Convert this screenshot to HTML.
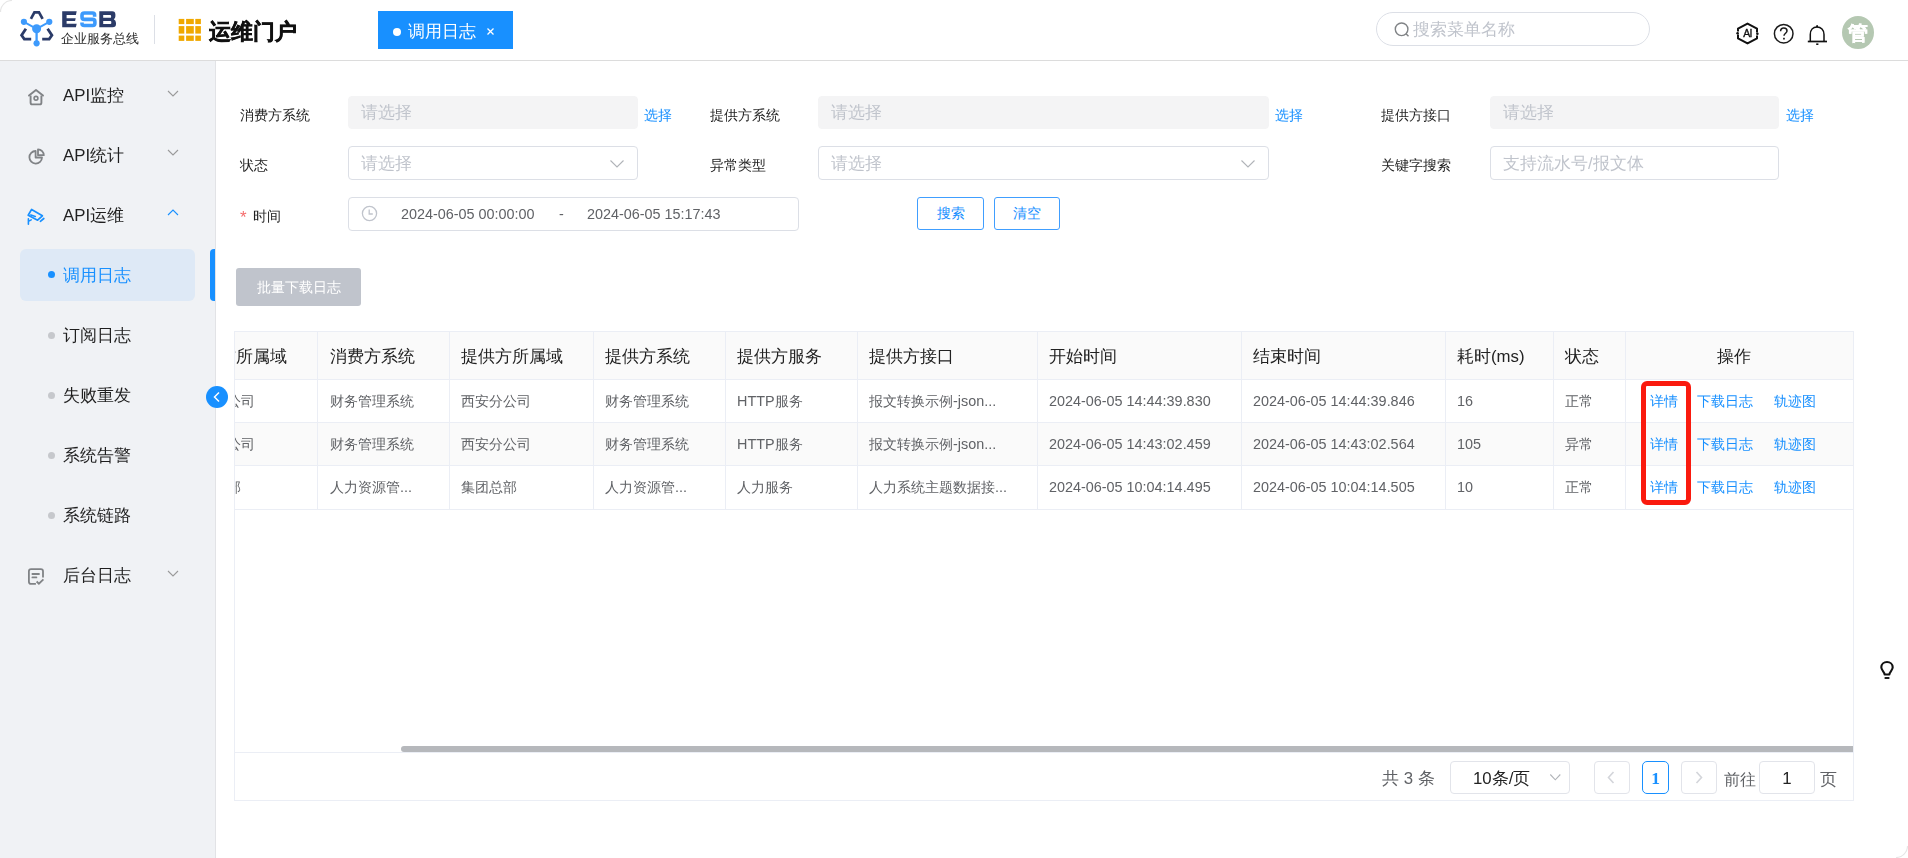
<!DOCTYPE html>
<html><head><meta charset="utf-8">
<style>
*{box-sizing:border-box;margin:0;padding:0}
html,body{width:1908px;height:858px;overflow:hidden;background:#fff;font-family:"Liberation Sans",sans-serif;color:#222}
.a{position:absolute;white-space:nowrap;will-change:transform}
#header{position:absolute;left:0;top:0;width:1908px;height:61px;background:#fff;border-bottom:1px solid #dcdcdc}
#side{position:absolute;left:0;top:61px;width:216px;height:797px;background:#f0f2f5;border-right:1px solid #e2e3e6}
.mi{font-size:16.8px;line-height:16.8px;color:#1f1f1f}
.dot{position:absolute;width:7px;height:7px;border-radius:50%;background:#c6c8cc}
.lbl{font-size:14.4px;line-height:14.4px;color:#1f1f1f}
.inp{position:absolute;height:33px;border:1px solid #dcdfe6;border-radius:4px;background:#fff}
.dis{background:#f4f4f5;border-color:#f4f4f5}
.ph{font-size:16.8px;line-height:16.8px;color:#c0c4cc}
.link{font-size:14.4px;line-height:14.4px;color:#1890ff}
.btn{position:absolute;height:33px;border:1px solid #409eff;border-radius:3px;background:#fff;color:#1890ff;font-size:14.4px;line-height:31px;text-align:center}
#tbl{position:absolute;left:234px;top:331px;width:1620px;height:470px;border:1px solid #ebeef5;overflow:hidden}
.th{font-size:16.8px;line-height:16.8px;color:#222}
.td{font-size:14.4px;line-height:14.4px;color:#606266}
.vl{position:absolute;top:0;width:1px;height:178px;background:#ebeef5}
.hl{position:absolute;left:0;width:1620px;height:1px;background:#ebeef5}
.pg{position:absolute;height:33px;border:1px solid #e2e4ea;border-radius:4px;background:#fff}
</style></head>
<body>
<!-- HEADER -->
<div id="header">
  <!-- logo icon -->
  <svg class="a" style="left:0;top:0" width="140" height="60" viewBox="0 0 140 60">
    <path d="M30.9 18.8 L34.4 12.4 L39 12.4 L42.6 18.8" fill="none" stroke="#2b3b68" stroke-width="2.7" stroke-linejoin="miter"/>
    <path d="M25.9 28.7 L21.6 35.3 L24.3 39.1 L31.2 39.1" fill="none" stroke="#2b3b68" stroke-width="2.8" stroke-linejoin="miter"/>
    <path d="M47.6 28.7 L51.9 35.3 L49.2 39.1 L42.2 39.1" fill="none" stroke="#2b3b68" stroke-width="2.8" stroke-linejoin="miter"/>
    <path d="M23.9 21.8 L36.6 28.8 L49.3 21.8" fill="none" stroke="#3d9afc" stroke-width="1.9"/>
    <path d="M36.6 29 L36.6 43" fill="none" stroke="#3d9afc" stroke-width="2.3"/>
    <circle cx="23.9" cy="21.8" r="3.1" fill="#3d9afc"/>
    <circle cx="49.3" cy="21.8" r="3.1" fill="#3d9afc"/>
    <circle cx="36.6" cy="28.8" r="4.5" fill="#3d9afc"/>
    <circle cx="36.6" cy="43.3" r="3.1" fill="#3d9afc"/>
    <path fill="#2b3b68" d="M62.2 11.25 H76.7 L75.9 15 H66.6 V18.3 H75.7 L75.1 20.9 H66.6 V23.8 H76.7 L75.9 27.3 H62.2 Z"/>
    <path fill="none" stroke="#3d9afc" stroke-width="3.6" d="M94.6 16.8 L94.6 15 Q94.6 13.05 92.6 13.05 L84.3 13.05 Q82 13.05 82 15.3 L82 16.9 Q82 19.4 84.5 19.4 L92.6 19.4 Q94.9 19.4 94.9 21.7 L94.9 23.3 Q94.9 25.5 92.7 25.5 L84.2 25.5 Q82 25.5 82 23.5 L82 22.4"/>
    <path fill="#2b3b68" fill-rule="evenodd" d="M99.3 11.25 H112.2 Q115.4 11.25 115.4 14.6 V16.3 Q115.4 18.3 113.8 19.3 Q116 20.2 116 23 V24 Q116 27.3 112.6 27.3 H99.3 Z M103.2 15 H110.2 Q111.1 15 111.1 15.9 V16.9 Q111.1 17.8 110.2 17.8 H103.2 Z M103.2 21 H110.4 Q111.3 21 111.3 21.9 V23.1 Q111.3 24 110.4 24 H103.2 Z"/>
  </svg>
  <div class="a" style="left:61px;top:32.5px;font-size:12.7px;line-height:12.7px;color:#2a2a2a">企业服务总线</div>
  <div class="a" style="left:154px;top:15px;width:1px;height:29px;background:#dcdfe6"></div>
  <!-- grid icon -->
  <svg class="a" style="left:0;top:0" width="210" height="50" viewBox="0 0 210 50"><g fill="#f0a800"><rect x="178.7" y="18.9" width="5.6" height="5.2"/><rect x="178.7" y="26.1" width="5.6" height="7.5"/><rect x="178.7" y="35.6" width="5.6" height="5.3"/><rect x="186.1" y="18.9" width="7.7" height="5.2"/><rect x="186.1" y="26.1" width="7.7" height="7.5"/><rect x="186.1" y="35.6" width="7.7" height="5.3"/><rect x="195.3" y="18.9" width="5.6" height="5.2"/><rect x="195.3" y="26.1" width="5.6" height="7.5"/><rect x="195.3" y="35.6" width="5.6" height="5.3"/></g></svg>
  <div class="a" style="left:209px;top:20.5px;font-size:21.6px;line-height:21.6px;font-weight:bold;color:#111;-webkit-text-stroke:0.5px #111">运维门户</div>
  <!-- tab -->
  <div class="a" style="left:378px;top:11px;width:135px;height:38px;background:#1890ff"></div>
  <div class="a" style="left:393px;top:28px;width:8px;height:8px;border-radius:50%;background:#fff"></div>
  <div class="a" style="left:408px;top:24px;font-size:16.8px;line-height:16.8px;color:#fff">调用日志</div>
  <svg class="a" style="left:486px;top:27px" width="9" height="9" viewBox="0 0 9 9"><path d="M1.5 1.5 L7.5 7.5 M7.5 1.5 L1.5 7.5" stroke="#fff" stroke-width="1.3"/></svg>
  <!-- search -->
  <div class="a" style="left:1376px;top:12px;width:274px;height:34px;border:1px solid #dcdfe6;border-radius:17px;background:#fff"></div>
  <svg class="a" style="left:1393px;top:21px" width="18" height="18" viewBox="0 0 18 18"><circle cx="8.6" cy="8.3" r="6.3" fill="none" stroke="#808386" stroke-width="1.4"/><path d="M13 12.8 L15.5 15.2" stroke="#808386" stroke-width="1.4"/></svg>
  <div class="a" style="left:1413px;top:21.5px;font-size:16.8px;line-height:16.8px;color:#c0c4cc">搜索菜单名称</div>
  <!-- icons -->
  <svg class="a" style="left:1735px;top:21px" width="25" height="25" viewBox="0 0 25 25">
    <path d="M3 10.5 L3 7.6 L12.5 2.6 L22 7.6 L22 11.5" fill="none" stroke="#111" stroke-width="2" stroke-linejoin="round"/>
    <path d="M22 14.5 L22 17.4 L12.5 22.4 L3 17.4 L3 13.5" fill="none" stroke="#111" stroke-width="2" stroke-linejoin="round"/>
    <circle cx="2.6" cy="12.3" r="1.3" fill="#111"/><circle cx="22.4" cy="12.7" r="1.3" fill="#111"/>
    <text x="12.6" y="16.3" text-anchor="middle" font-family="Liberation Sans" font-size="10.5" fill="#111" stroke="#111" stroke-width="0.35" letter-spacing="-0.6">AI</text>
  </svg>
  <svg class="a" style="left:1772px;top:22px" width="24" height="24" viewBox="0 0 24 24">
    <circle cx="11.7" cy="11.7" r="9.3" fill="none" stroke="#1b1b1b" stroke-width="1.5"/>
    <path d="M8.6 9.3 C8.6 7.2 10 6 11.8 6 C13.7 6 15 7.2 15 9 C15 11 12 11.5 12 13.8" fill="none" stroke="#1b1b1b" stroke-width="1.5"/>
    <rect x="11.1" y="15.8" width="1.7" height="1.7" fill="#1b1b1b"/>
  </svg>
  <svg class="a" style="left:1806px;top:22px" width="24" height="24" viewBox="0 0 24 24">
    <path d="M4.3 19.3 L4.3 12.5 C4.3 8 7 5 11 5 C15 5 18 8 18 12.5 L18 19.3" fill="none" stroke="#111" stroke-width="1.5"/>
    <path d="M1.8 19.5 L21 19.5" stroke="#111" stroke-width="1.7"/>
    <path d="M10.5 5 L11.1 3.2 L11.7 5 Z" fill="#111" stroke="#111"/>
    <path d="M10.2 22.2 L12.4 22.2" stroke="#111" stroke-width="1.6"/>
  </svg>
  <div class="a" style="left:1842px;top:16px;width:32px;height:33px;border-radius:50%;background:#b5c8b2"></div>
  <div class="a" style="left:1848px;top:22.5px;font-size:20px;line-height:20px;font-weight:bold;color:#fff;-webkit-text-stroke:0.5px #fff">管</div>
</div>

<!-- SIDEBAR -->
<div id="side"></div>
<div id="menu">
  <!-- API监控 -->
  <svg class="a" style="left:26px;top:87px" width="20" height="20" viewBox="0 0 20 20">
    <path d="M3 8.6 L10 3 L17 8.6" fill="none" stroke="#808386" stroke-width="1.9" stroke-linejoin="round" stroke-linecap="round"/>
    <path d="M4.6 8.5 L4.6 15.8 Q4.6 17.4 6.2 17.4 L13.8 17.4 Q15.4 17.4 15.4 15.8 L15.4 8.5" fill="none" stroke="#808386" stroke-width="1.9"/>
    <circle cx="10" cy="11.3" r="1.9" fill="none" stroke="#808386" stroke-width="1.6"/>
  </svg>
  <div class="a mi" style="left:63px;top:87.5px">API监控</div>
  <svg class="a" style="left:166px;top:89px" width="14" height="10" viewBox="0 0 14 10"><path d="M2 2 L7 7 L12 2" fill="none" stroke="#9a9a9a" stroke-width="1.1"/></svg>
  <!-- API统计 -->
  <svg class="a" style="left:26.5px;top:146.3px" width="20" height="20" viewBox="0 0 20 20">
    <path d="M8.6 5 A6.3 6.3 0 1 0 15 11.5 L8.6 11.5 Z" fill="none" stroke="#808386" stroke-width="1.8" stroke-linejoin="round"/>
    <path d="M11 3.3 A6 6 0 0 1 16.8 9.2 L11 9.2 Z" fill="none" stroke="#808386" stroke-width="1.8" stroke-linejoin="round"/>
  </svg>
  <div class="a mi" style="left:63px;top:147.5px">API统计</div>
  <svg class="a" style="left:166px;top:148px" width="14" height="10" viewBox="0 0 14 10"><path d="M2 2 L7 7 L12 2" fill="none" stroke="#9a9a9a" stroke-width="1.1"/></svg>
  <!-- API运维 -->
  <svg class="a" style="left:26px;top:206px" width="20" height="20" viewBox="0 0 20 20">
    <path d="M5.6 3.4 L16.4 9.8 L11.6 14.2 L2.2 9.2 Z" fill="none" stroke="#1890ff" stroke-width="1.7" stroke-linejoin="round"/>
    <path d="M4.9 8.9 L9.3 10.4" stroke="#1890ff" stroke-width="1.6" stroke-linecap="round"/>
    <path d="M2.4 12.7 L2.4 18.2 M2.4 15.4 L5.2 13.9" fill="none" stroke="#1890ff" stroke-width="1.6" stroke-linecap="round"/>
    <path d="M14.4 15.3 L17.8 12.5" stroke="#1890ff" stroke-width="1.7" stroke-linecap="round"/>
  </svg>
  <div class="a mi" style="left:63px;top:207.5px">API运维</div>
  <svg class="a" style="left:166px;top:208px" width="14" height="10" viewBox="0 0 14 10"><path d="M2 7 L7 2 L12 7" fill="none" stroke="#1890ff" stroke-width="1.1"/></svg>
  <!-- active -->
  <div class="a" style="left:20px;top:249px;width:175px;height:52px;border-radius:6px;background:#dee9f6"></div>
  <div class="a" style="left:210px;top:249px;width:5px;height:52px;border-radius:4px 0 0 4px;background:#1890ff"></div>
  <div class="dot" style="left:48px;top:271px;background:#1890ff"></div>
  <div class="a mi" style="left:63px;top:268px;color:#1890ff">调用日志</div>
  <div class="dot" style="left:48px;top:331.5px"></div>
  <div class="a mi" style="left:63px;top:328px">订阅日志</div>
  <div class="dot" style="left:48px;top:391.5px"></div>
  <div class="a mi" style="left:63px;top:388px">失败重发</div>
  <div class="dot" style="left:48px;top:451.5px"></div>
  <div class="a mi" style="left:63px;top:448px">系统告警</div>
  <div class="dot" style="left:48px;top:511.5px"></div>
  <div class="a mi" style="left:63px;top:508px">系统链路</div>
  <!-- 后台日志 -->
  <svg class="a" style="left:26px;top:566px" width="20" height="20" viewBox="0 0 20 20">
    <path d="M9.9 17.9 L5.1 17.9 Q2.9 17.9 2.9 15.7 L2.9 5.3 Q2.9 3.1 5.1 3.1 L14.8 3.1 Q17 3.1 17 5.3 L17 11.6" fill="none" stroke="#808386" stroke-width="1.8"/>
    <path d="M6.4 8 L13 8 M6.4 11.4 L10.4 11.4" stroke="#808386" stroke-width="1.8" stroke-linecap="round"/>
    <path d="M10.6 15.5 L12.9 17.7 L17.4 13.4" fill="none" stroke="#808386" stroke-width="1.8"/>
  </svg>
  <div class="a mi" style="left:63px;top:568px">后台日志</div>
  <svg class="a" style="left:166px;top:569px" width="14" height="10" viewBox="0 0 14 10"><path d="M2 2 L7 7 L12 2" fill="none" stroke="#9a9a9a" stroke-width="1.1"/></svg>
  <!-- collapse button -->
  <div class="a" style="z-index:5;left:206px;top:386px;width:22px;height:22px;border-radius:50%;background:#1890ff"></div>
  <svg class="a" style="z-index:6;left:206px;top:386px" width="22" height="22" viewBox="0 0 22 22"><path d="M13 6.5 L8.5 11 L13 15.5" fill="none" stroke="#fff" stroke-width="1.5"/></svg>
</div>

<!-- CONTENT -->
<div id="content">
  <!-- row1 -->
  <div class="a lbl" style="left:240px;top:108px">消费方系统</div>
  <div class="inp dis" style="left:348px;top:96px;width:290px"></div>
  <div class="a ph" style="left:361px;top:104.5px">请选择</div>
  <div class="a link" style="left:643.5px;top:107.5px">选择</div>
  <div class="a lbl" style="left:710px;top:108px">提供方系统</div>
  <div class="inp dis" style="left:818px;top:96px;width:451px"></div>
  <div class="a ph" style="left:831px;top:104.5px">请选择</div>
  <div class="a link" style="left:1275px;top:107.5px">选择</div>
  <div class="a lbl" style="left:1381px;top:108px">提供方接口</div>
  <div class="inp dis" style="left:1490px;top:96px;width:289px"></div>
  <div class="a ph" style="left:1503px;top:104.5px">请选择</div>
  <div class="a link" style="left:1785.5px;top:107.5px">选择</div>
  <!-- row2 -->
  <div class="a lbl" style="left:240px;top:158px">状态</div>
  <div class="inp" style="left:348px;top:146px;width:290px;height:34px"></div>
  <div class="a ph" style="left:361px;top:156px">请选择</div>
  <svg class="a" style="left:609px;top:159px" width="16" height="10" viewBox="0 0 16 10"><path d="M1.5 1.5 L8 8 L14.5 1.5" fill="none" stroke="#b0b3b8" stroke-width="1.1"/></svg>
  <div class="a lbl" style="left:710px;top:158px">异常类型</div>
  <div class="inp" style="left:818px;top:146px;width:451px;height:34px"></div>
  <div class="a ph" style="left:831px;top:156px">请选择</div>
  <svg class="a" style="left:1240px;top:159px" width="16" height="10" viewBox="0 0 16 10"><path d="M1.5 1.5 L8 8 L14.5 1.5" fill="none" stroke="#b0b3b8" stroke-width="1.1"/></svg>
  <div class="a lbl" style="left:1381px;top:158px">关键字搜索</div>
  <div class="inp" style="left:1490px;top:146px;width:289px;height:34px"></div>
  <div class="a ph" style="left:1503px;top:156px">支持流水号/报文体</div>
  <!-- row3 -->
  <div class="a" style="left:239.5px;top:208.5px;font-size:17px;line-height:17px;color:#f56c6c">*</div>
  <div class="a lbl" style="left:252.5px;top:209px">时间</div>
  <div class="inp" style="left:348px;top:197px;width:451px;height:34px"></div>
  <svg class="a" style="left:361px;top:205px" width="17" height="17" viewBox="0 0 17 17"><circle cx="8.5" cy="8.5" r="7.1" fill="none" stroke="#c0c4cc" stroke-width="1.3"/><path d="M8.2 4.5 L8.2 9 L11.8 9" fill="none" stroke="#c0c4cc" stroke-width="1.3"/></svg>
  <div class="a td" style="left:400.5px;top:206.5px">2024-06-05 00:00:00</div>
  <div class="a td" style="left:559px;top:206.5px">-</div>
  <div class="a td" style="left:587px;top:206.5px">2024-06-05 15:17:43</div>
  <div class="btn" style="left:917px;top:197px;width:67px">搜索</div>
  <div class="btn" style="left:994px;top:197px;width:66px">清空</div>
  <!-- batch -->
  <div class="a" style="left:236px;top:268px;width:125px;height:38px;border-radius:3px;background:#c0c4cc;color:#fff;font-size:14.4px;line-height:38px;text-align:center">批量下载日志</div>
  <!-- table -->
  <div id="tbl">
<div class="a" style="left:0;top:0;width:1620px;height:47px;background:#fafafa"></div>
<div class="a" style="left:0;top:91px;width:1620px;height:42px;background:#fafafa"></div>
<div class="vl" style="left:82px;height:177px"></div>
<div class="vl" style="left:214px;height:177px"></div>
<div class="vl" style="left:358px;height:177px"></div>
<div class="vl" style="left:490px;height:177px"></div>
<div class="vl" style="left:622px;height:177px"></div>
<div class="vl" style="left:802px;height:177px"></div>
<div class="vl" style="left:1006px;height:177px"></div>
<div class="vl" style="left:1210px;height:177px"></div>
<div class="vl" style="left:1318px;height:177px"></div>
<div class="vl" style="left:1390px;height:177px"></div>
<div class="hl" style="top:47px"></div>
<div class="hl" style="top:90px"></div>
<div class="hl" style="top:133px"></div>
<div class="hl" style="top:177px"></div>
<div class="a th" style="left:-50px;top:16.5px">消费方所属域</div>
<div class="a th" style="left:94.5px;top:16.5px">消费方系统</div>
<div class="a th" style="left:226px;top:16.5px">提供方所属域</div>
<div class="a th" style="left:370px;top:16.5px">提供方系统</div>
<div class="a th" style="left:502px;top:16.5px">提供方服务</div>
<div class="a th" style="left:634px;top:16.5px">提供方接口</div>
<div class="a th" style="left:814px;top:16.5px">开始时间</div>
<div class="a th" style="left:1018px;top:16.5px">结束时间</div>
<div class="a th" style="left:1222px;top:16.5px">耗时(ms)</div>
<div class="a th" style="left:1330px;top:16.5px">状态</div>
<div class="a th" style="left:1481.5px;top:16.5px">操作</div>
<div class="a td" style="left:-50px;top:61.5px">西安分公司</div>
<div class="a td" style="left:94.5px;top:61.5px">财务管理系统</div>
<div class="a td" style="left:226px;top:61.5px">西安分公司</div>
<div class="a td" style="left:370px;top:61.5px">财务管理系统</div>
<div class="a td" style="left:502px;top:61.5px">HTTP服务</div>
<div class="a td" style="left:634px;top:61.5px">报文转换示例-json...</div>
<div class="a td" style="left:814px;top:61.5px">2024-06-05 14:44:39.830</div>
<div class="a td" style="left:1018px;top:61.5px">2024-06-05 14:44:39.846</div>
<div class="a td" style="left:1222px;top:61.5px">16</div>
<div class="a td" style="left:1330px;top:61.5px">正常</div>
<div class="a link" style="left:1415px;top:61.5px">详情</div>
<div class="a link" style="left:1462.3px;top:61.5px">下载日志</div>
<div class="a link" style="left:1538.5px;top:61.5px">轨迹图</div>
<div class="a td" style="left:-50px;top:104.5px">西安分公司</div>
<div class="a td" style="left:94.5px;top:104.5px">财务管理系统</div>
<div class="a td" style="left:226px;top:104.5px">西安分公司</div>
<div class="a td" style="left:370px;top:104.5px">财务管理系统</div>
<div class="a td" style="left:502px;top:104.5px">HTTP服务</div>
<div class="a td" style="left:634px;top:104.5px">报文转换示例-json...</div>
<div class="a td" style="left:814px;top:104.5px">2024-06-05 14:43:02.459</div>
<div class="a td" style="left:1018px;top:104.5px">2024-06-05 14:43:02.564</div>
<div class="a td" style="left:1222px;top:104.5px">105</div>
<div class="a td" style="left:1330px;top:104.5px">异常</div>
<div class="a link" style="left:1415px;top:104.5px">详情</div>
<div class="a link" style="left:1462.3px;top:104.5px">下载日志</div>
<div class="a link" style="left:1538.5px;top:104.5px">轨迹图</div>
<div class="a td" style="left:-50px;top:148px">集团总部</div>
<div class="a td" style="left:94.5px;top:148px">人力资源管...</div>
<div class="a td" style="left:226px;top:148px">集团总部</div>
<div class="a td" style="left:370px;top:148px">人力资源管...</div>
<div class="a td" style="left:502px;top:148px">人力服务</div>
<div class="a td" style="left:634px;top:148px">人力系统主题数据接...</div>
<div class="a td" style="left:814px;top:148px">2024-06-05 10:04:14.495</div>
<div class="a td" style="left:1018px;top:148px">2024-06-05 10:04:14.505</div>
<div class="a td" style="left:1222px;top:148px">10</div>
<div class="a td" style="left:1330px;top:148px">正常</div>
<div class="a link" style="left:1415px;top:148px">详情</div>
<div class="a link" style="left:1462.3px;top:148px">下载日志</div>
<div class="a link" style="left:1538.5px;top:148px">轨迹图</div>
<div class="a" style="left:1406px;top:48.5px;width:50px;height:124px;border:5px solid #fa1a0e;border-radius:6px"></div>
<div class="hl" style="top:420px"></div>
<div class="a" style="left:166px;top:414px;width:1452px;height:6px;border-radius:3px 0 0 3px;background:#b6b8bc"></div>
<div class="a" style="left:1147px;top:439px;font-size:16.8px;line-height:16.8px;color:#606266">共 3 条</div>
<div class="pg" style="left:1215px;top:429px;width:120px;height:33px"></div>
<div class="a" style="left:1238px;top:438.5px;font-size:16.8px;line-height:16.8px;color:#222">10条/页</div>
<svg class="a" style="left:1314px;top:441px" width="13" height="9" viewBox="0 0 13 9"><path d="M1.3 1.5 L6.3 6.8 L11.3 1.5" fill="none" stroke="#b0b3b8" stroke-width="1.1"/></svg>
<div class="pg" style="left:1359px;top:429px;width:36px;height:33px"></div>
<svg class="a" style="left:1370px;top:438px" width="12" height="15" viewBox="0 0 12 15"><path d="M8.5 2 L3.5 7.5 L8.5 13" fill="none" stroke="#d3d5da" stroke-width="1.6"/></svg>
<div class="a" style="left:1407px;top:429px;width:27px;height:33px;border:1px solid #1890ff;border-radius:5px"></div>
<div class="a" style="left:1407px;top:438px;width:27px;text-align:center;font-family:'Liberation Serif',serif;font-weight:bold;font-size:17.5px;line-height:17.5px;color:#1890ff">1</div>
<div class="pg" style="left:1446px;top:429px;width:36px;height:33px"></div>
<svg class="a" style="left:1458px;top:438px" width="12" height="15" viewBox="0 0 12 15"><path d="M3.5 2 L8.5 7.5 L3.5 13" fill="none" stroke="#d3d5da" stroke-width="1.6"/></svg>
<div class="a" style="left:1489px;top:439.5px;font-size:15.6px;line-height:15.6px;color:#606266">前往</div>
<div class="pg" style="left:1524px;top:429px;width:56px;height:33px"></div>
<div class="a" style="left:1524px;top:439px;width:56px;text-align:center;font-size:16.8px;line-height:16.8px;color:#222">1</div>
<div class="a" style="left:1584.5px;top:439.5px;font-size:16.8px;line-height:16.8px;color:#606266">页</div>
</div>
</div>

<svg class="a" style="left:1878px;top:660px" width="19" height="22" viewBox="0 0 19 22"><path d="M6.6 14.5 C6.6 12 3.3 10.5 3.3 7.3 C3.3 4.2 5.9 2 9 2 C12.1 2 14.7 4.2 14.7 7.3 C14.7 10.5 11.4 12 11.4 14.5 Z" fill="none" stroke="#111" stroke-width="2.1" stroke-linejoin="round"/><path d="M6.6 18 L11.4 18" stroke="#111" stroke-width="1.9"/></svg>
<svg class="a" style="left:0;top:0;z-index:20" width="14" height="14" viewBox="0 0 14 14"><path d="M0.5 12 A11.5 11.5 0 0 1 12 0.5" fill="none" stroke="#e6e6e6" stroke-width="1.2"/></svg>
<svg class="a" style="left:1894px;top:844px;z-index:20" width="14" height="14" viewBox="0 0 14 14"><path d="M13.5 2 A11.5 11.5 0 0 1 2 13.5" fill="none" stroke="#e6e6e6" stroke-width="1.2"/></svg>
</body></html>
